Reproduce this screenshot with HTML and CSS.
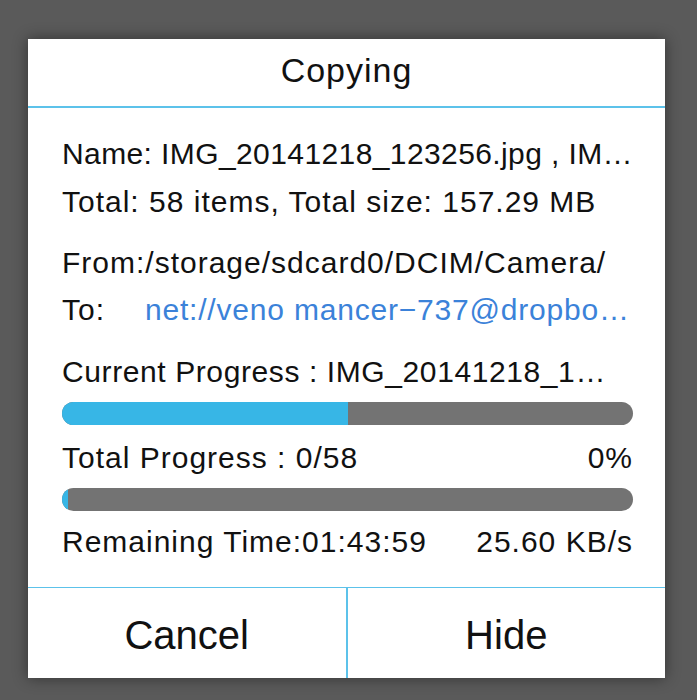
FILE: index.html
```html
<!DOCTYPE html>
<html>
<head>
<meta charset="utf-8">
<link rel="stylesheet" href="styles.css">
</head>
<body>
<div class="dialog">
  <div class="title">Copying</div>
  <div class="content">
    <div class="block-info">
      <div class="line name">Name: IMG_20141218_123256.jpg , IM…</div>
      <div class="line">Total: 58 items, Total size: 157.29 MB</div>
    </div>
    <div class="block-path">
      <div class="line">From:/storage/sdcard0/DCIM/Camera/</div>
      <div class="line to-row"><span class="label">To:</span><span class="link">net://veno mancer−737@dropbo…</span></div>
    </div>
    <div class="line current">Current Progress : IMG_20141218_1…</div>
    <div class="bar"><div class="fill" style="width: 50%"></div></div>
    <div class="line split total"><span>Total Progress : 0/58</span><span>0%</span></div>
    <div class="bar"><div class="fill" style="width: 1%"></div></div>
    <div class="line split remain"><span>Remaining Time:01:43:59</span><span>25.60 KB/s</span></div>
  </div>
  <div class="buttons">
    <div class="btn">Cancel</div>
    <div class="btn">Hide</div>
  </div>
</div>
</body>
</html>
```

FILE: styles.css
```css
html, body {
  margin: 0;
  padding: 0;
}
body {
  background: #5a5a5a;
  width: 697px;
  height: 700px;
  padding: 39px 0 0 28px;
  box-sizing: border-box;
  font-family: "Liberation Sans", Arial, sans-serif;
  color: #111;
}
.dialog {
  width: 637px;
  height: 639px;
  background: #fff;
  box-shadow: 0 0 14px rgba(0,0,0,0.45);
  display: flex;
  flex-direction: column;
}
.title {
  height: 64px;
  line-height: 62px;
  padding-bottom: 3px;
  text-align: center;
  font-size: 34px;
  letter-spacing: 1px;
  border-bottom: 2px solid #5cc2ea;
  box-sizing: content-box;
}
.content {
  flex: 1;
  padding: 22px 32px 0 34px;
  font-size: 30px;
  letter-spacing: 1px;
}
.line {
  line-height: 47px;
  white-space: nowrap;
}
.block-info .line {
  line-height: 48px;
}
.name {
  letter-spacing: 0.4px;
}
.block-path {
  margin-top: 13px;
}
.to-row {
  display: flex;
}
.label {
  width: 83px;
  flex: none;
}
.link {
  color: #3b82d9;
  letter-spacing: 0.8px;
}
.current {
  margin-top: 15px;
  letter-spacing: 0.6px;
}
.bar {
  height: 23px;
  border-radius: 12px;
  background: #737373;
  overflow: hidden;
  margin-top: 7px;
}
.fill {
  height: 100%;
  background: #37b6e6;
}
.split {
  display: flex;
  justify-content: space-between;
}
.total {
  margin-top: 9px;
}
.remain {
  margin-top: 7px;
}
.buttons {
  height: 90px;
  border-top: 1px solid #5cc2ea;
  display: flex;
}
.btn {
  flex: 1;
  text-align: center;
  font-size: 40px;
  line-height: 90px;
  padding-top: 2px;
  box-sizing: border-box;
}
.btn + .btn {
  border-left: 2px solid #5cc2ea;
}
```
